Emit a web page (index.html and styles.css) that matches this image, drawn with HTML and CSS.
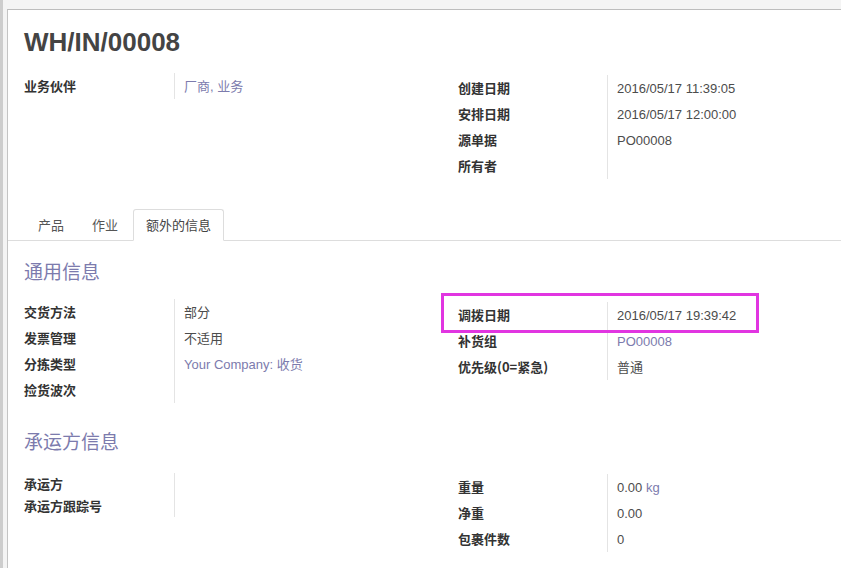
FILE: index.html
```html
<!DOCTYPE html>
<html>
<head>
  <meta charset="utf-8">
  <title>WH/IN/00008</title>
  <link rel="stylesheet" href="styles.css">
</head>
<body>
<div class="frame">
  <div class="sheet">
    <div class="sheet__head">
      <h1 class="sheet__title">WH/IN/00008</h1>
      <div class="groups groups_top">
        <div class="group group_left group_raise">
          <div class="field__label">业务伙伴</div>
          <div class="field__value field__value_link">厂商, 业务</div>
        </div>
        <div class="group">
          <div class="field__label">创建日期</div>
          <div class="field__value">2016/05/17 11:39:05</div>
          <div class="field__label">安排日期</div>
          <div class="field__value">2016/05/17 12:00:00</div>
          <div class="field__label">源单据</div>
          <div class="field__value">PO00008</div>
          <div class="field__label">所有者</div>
          <div class="field__value"></div>
        </div>
      </div>
    </div>

    <div class="tabs">
      <div class="tabs__nav">
        <a class="tabs__link" href="#">产品</a>
        <a class="tabs__link" href="#">作业</a>
        <a class="tabs__link tabs__link_active" href="#">额外的信息</a>
      </div>
      <div class="tabs__pane">
        <h2 class="section">通用信息</h2>
        <div class="groups">
          <div class="group group_left">
            <div class="field__label">交货方法</div>
            <div class="field__value">部分</div>
            <div class="field__label">发票管理</div>
            <div class="field__value">不适用</div>
            <div class="field__label">分拣类型</div>
            <div class="field__value field__value_link">Your Company: 收货</div>
            <div class="field__label">捡货波次</div>
            <div class="field__value"></div>
          </div>
          <div class="group group_shift">
            <span class="highlight"></span>
            <div class="field__label">调拨日期</div>
            <div class="field__value">2016/05/17 19:39:42</div>
            <div class="field__label">补货组</div>
            <div class="field__value field__value_link">PO00008</div>
            <div class="field__label">优先级(0=紧急)</div>
            <div class="field__value">普通</div>
          </div>
        </div>

        <h2 class="section">承运方信息</h2>
        <div class="groups">
          <div class="group group_left group_compact">
            <div class="field__label">承运方</div>
            <div class="field__value"></div>
            <div class="field__label">承运方跟踪号</div>
            <div class="field__value"></div>
          </div>
          <div class="group group_shift">
            <div class="field__label">重量</div>
            <div class="field__value">0.00 <span class="unit">kg</span></div>
            <div class="field__label">净重</div>
            <div class="field__value">0.00</div>
            <div class="field__label">包裹件数</div>
            <div class="field__value">0</div>
          </div>
        </div>
      </div>
    </div>
  </div>
</div>
</body>
</html>
```

FILE: styles.css
```css
html, body {
    margin: 0;
    padding: 0;
    height: 100%;
  }
body {
    font-family: "Liberation Sans", "Noto Sans CJK SC", sans-serif;
    font-size: 13px;
    color: #4c4c4c;
    background: #f4f4f4;
    overflow: hidden;
  }
.frame {
    min-height: 100%;
    box-sizing: border-box;
    padding: 9px 0 0 4px;
    border-left: 3px solid #cdcdcd;
  }
.sheet {
    background: #ffffff;
    border-top: 1px solid #bdbdbd;
    border-left: 1px solid #c4c4c4;
    min-height: 560px;
  }
.sheet__head {
    padding: 0 16px;
  }
.sheet__title {
    margin: 0;
    padding-top: 17px;
    font-size: 26px;
    line-height: 30px;
    font-weight: bold;
    color: #444;
  }

/* группы полей: слева и справа */
.groups {
    display: flex;
    align-items: flex-start;
  }
.groups_top {
    margin-top: 18px;
  }
.group {
    position: relative;
    display: grid;
    grid-template-columns: 149px 1fr;
    flex: 1;
  }
.group_left {
    flex: 0 0 434px;
    grid-template-columns: 150px 1fr;
  }
.group_raise {
    margin-top: -2px;
  }
.group_shift {
    margin-top: 3px;
  }
.field__label {
    font-family: "Noto Sans CJK SC", "Liberation Sans", sans-serif;
    font-weight: bold;
    font-size: 13px;
    line-height: 18px;
    padding: 4px 0;
    color: #333;
  }
.field__value {
    border-left: 1px solid #e4e4e4;
    padding: 5px 0 3px 9px;
    line-height: 18px;
    font-family: "Liberation Sans", "Noto Sans CJK SC", sans-serif;
    font-size: 13px;
  }
.field__value_link,
.unit {
    color: #7c7bad;
  }
.group_compact .field__label {
    padding: 2px 0;
  }
.group_compact .field__value {
    padding: 2px 0 2px 9px;
  }
.group_compact {
    margin-top: 2px;
  }

/* рамка-выделение поверх строки */
.highlight {
    position: absolute;
    left: -17px;
    top: -9px;
    width: 312px;
    height: 34px;
    border: 3px solid #e135e1;
  }

.tabs {
    margin-top: 30px;
  }
.tabs__nav {
    display: flex;
    padding-left: 17px;
    border-bottom: 1px solid #dddddd;
  }
.tabs__link {
    padding: 6px 12px 6px;
    margin-right: 2px;
    margin-bottom: -1px;
    font-family: "Noto Sans CJK SC", "Liberation Sans", sans-serif;
    font-size: 13px;
    line-height: 18px;
    color: #555;
    text-decoration: none;
    border: 1px solid transparent;
    border-radius: 3px 3px 0 0;
  }
.tabs__link_active {
    border-color: #dddddd;
    border-bottom-color: #ffffff;
    background: #ffffff;
    color: #444;
  }
.tabs__pane {
    padding: 0 16px;
  }
.section {
    margin: 17px 0 15px;
    font-family: "Noto Sans CJK SC", sans-serif;
    font-weight: normal;
    font-size: 19px;
    line-height: 26px;
    color: #7c7bad;
  }
.groups + .section {
    margin-top: 25px;
    margin-bottom: 17px;
  }
```
